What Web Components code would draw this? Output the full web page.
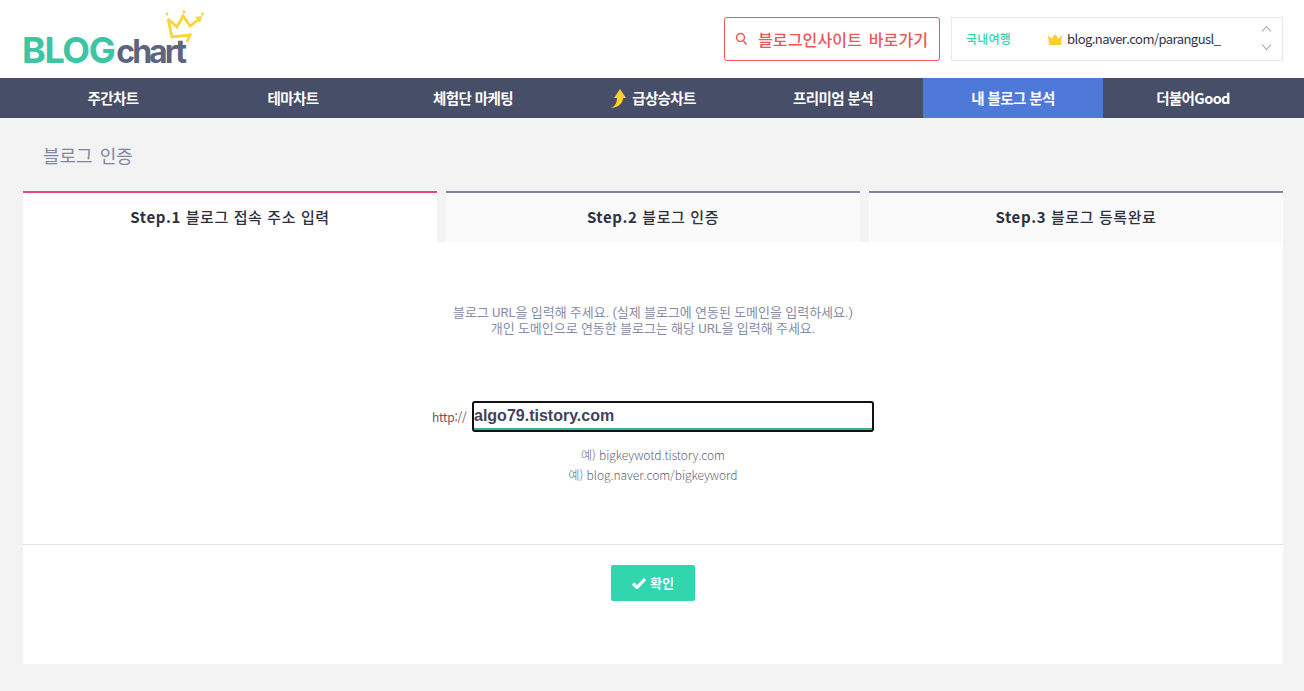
<!DOCTYPE html>
<html lang="ko"><head><meta charset="utf-8"><title>블로그 인증</title>
<style>
html,body{margin:0;padding:0;background:#f3f3f3;height:691px;overflow:hidden}
body{font-family:"Noto Sans CJK KR","Noto Sans",sans-serif;}
</style></head><body>
<bc-header></bc-header>
<bc-nav>
<bc-nav-item>주간차트</bc-nav-item>
<bc-nav-item>테마차트</bc-nav-item>
<bc-nav-item>체험단 마케팅</bc-nav-item>
<bc-nav-item arrow>급상승차트</bc-nav-item>
<bc-nav-item>프리미엄 분석</bc-nav-item>
<bc-nav-item active>내 블로그 분석</bc-nav-item>
<bc-nav-item>더불어Good</bc-nav-item>
</bc-nav>
<bc-main>
<bc-tab active><b>Step.1</b> 블로그 접속 주소 입력</bc-tab>
<bc-tab><b>Step.2</b> 블로그 인증</bc-tab>
<bc-tab><b>Step.3</b> 블로그 등록완료</bc-tab>
</bc-main>
<script>
function def(name,html,init){
  customElements.define(name,class extends HTMLElement{
    constructor(){super();this.attachShadow({mode:'open'}).innerHTML=html;}
    connectedCallback(){if(init)init(this);}
  });
}
const KR='"Noto Sans CJK KR","Noto Sans",sans-serif';
def('bc-logo',`<style>
:host{display:block;position:relative;width:190px;height:70px}
.t{position:absolute;left:-1px;top:25px;display:flex;align-items:baseline;line-height:40px;white-space:nowrap}
.b{font:700 36px/40px "Inter","Liberation Sans",sans-serif;color:#3cc5a2;letter-spacing:-1.4px}
.c{font:700 32px/40px "Inter","Liberation Sans",sans-serif;color:#5c6480;letter-spacing:-3px;margin-left:2px}
svg{position:absolute;left:140px;top:5px}
</style><div class="t"><span class="b">BLOG</span><span class="c">chart</span></div>
<svg width="44" height="36" viewBox="0 0 44 36"><g fill="none" stroke="#fbd43c" stroke-width="2.800" stroke-linejoin="miter"><path d="M5 9l4 18 18-2-3 7"/><path d="M5 9l9 8 6-11 7 10 8-6"/></g><path d="M32 7l7-1-2 7z" fill="#fbd43c"/><circle cx="4" cy="4" r="1.500" fill="#fbd43c"/><circle cx="21" cy="1.800" r="1.500" fill="#fbd43c"/><circle cx="39.500" cy="4" r="1.500" fill="#fbd43c"/></svg>`);
def('bc-insight',`<style>
:host{display:flex;align-items:center;box-sizing:border-box;width:216px;height:44px;border:1px solid #ee5658;border-radius:3px;padding-left:10px;color:#ee5658;font:500 16px/20px ${KR};letter-spacing:.15px;word-spacing:2px;white-space:nowrap;background:#fff}
svg{margin-right:10px;flex:none}
</style><svg width="13" height="14" viewBox="0 0 13 14" fill="none" stroke="#ee5658" stroke-width="1.500"><circle cx="5.500" cy="5.500" r="4"/><path d="M8.500 9l3 3.500"/></svg><slot></slot>`);
def('bc-selector',`<style>
:host{display:flex;align-items:center;position:relative;box-sizing:border-box;width:332px;height:44px;border:1px solid #e6e8f5;background:#fff;white-space:nowrap}
.cat{font:500 12px/16px ${KR};color:#2fd5ae;margin-left:14px;width:82px;letter-spacing:.2px}
svg.cr{flex:none;margin-right:5px}
.u{font:400 13px/18px ${KR};color:#2f3444;letter-spacing:-.55px}
.ar{position:absolute;right:10px;top:7px;display:flex;flex-direction:column;gap:10px}
</style><span class="cat">국내여행</span>
<svg class="cr" width="14" height="11" viewBox="0 0 14 11"><path d="M0 1l3.500 3.500L7 0l3.500 4.500L14 1l-1 10H1z" fill="#fbcf33"/></svg>
<span class="u">blog.naver.com/parangusl_</span>
<div class="ar"><svg width="11" height="8" viewBox="0 0 11 8" fill="none" stroke="#9aa0b4" stroke-width="1.100"><path d="M1 6.500l4.500-5 4.500 5"/></svg><svg width="11" height="8" viewBox="0 0 11 8" fill="none" stroke="#9aa0b4" stroke-width="1.100"><path d="M1 1.500l4.500 5 4.500-5"/></svg></div>`);
def('bc-header',`<style>
:host{display:flex;align-items:flex-start;box-sizing:border-box;height:78px;background:#fff;padding:0 21px 0 23px}
bc-logo{margin-top:5px}
.r{margin-left:auto;display:flex;gap:11px;margin-top:17px}
</style><bc-logo></bc-logo><div class="r"><bc-insight>블로그인사이트 바로가기</bc-insight><bc-selector></bc-selector></div>`);
def('bc-nav',`<style>
:host{display:flex;box-sizing:border-box;height:40px;background:#474e67;padding-left:23px}
</style><slot></slot>`);
def('bc-nav-item',`<style>
:host{display:flex;align-items:center;justify-content:center;width:180px;height:40px;color:#fff;font:700 14.5px/20px ${KR};letter-spacing:-.6px;white-space:nowrap}
:host([active]){background:#4f79d8}
svg{display:none;margin-right:5px}
:host([arrow]) svg{display:block}
</style><svg width="17" height="19" viewBox="0 0 17 19"><path d="M0 19c5-1 7-5 7-10H4l6-9 6 9h-3C13 15 7 19 0 19z" fill="#fbd02f"/></svg><slot></slot>`);
def('bc-tab',`<style>
:host{display:block;box-sizing:border-box;width:414px;height:51px;background:#fafafa;border-top:2px solid #7d86a3;color:#2c3140;font:500 15px/47px ${KR};letter-spacing:.6px;text-align:center;white-space:nowrap}
:host([active]){background:#fff;border-top-color:#e8476f}
::slotted(b){font-weight:700}
</style><slot></slot>`);
def('bc-form',`<style>
:host{display:flex;flex-direction:column;align-items:center;background:#fff;height:422px}
.msg{margin-top:63px;font:400 13px/16px Roboto,${KR};color:#868ca4;text-align:center;width:100%}
.row{display:flex;align-items:center;margin-top:64px;width:442px}
.p{font:400 12px/16px ${KR};color:#8b4a52;width:40px;flex:none;letter-spacing:-.25px}
input{box-sizing:border-box;width:402px;height:31px;border:2px solid #111;border-radius:3px;outline:0;padding:0 0 2px 0;font:700 16px "Liberation Sans",Arial,sans-serif;color:#3f4459;box-shadow:inset 0 -2px 0 #2fb596;background:#fff}
.ex{margin-top:13px;font:300 12px/20px ${KR};color:#5f6472;text-align:center;letter-spacing:-.05px}
hr{border:0;height:1px;background:#e2e2e6;width:100%;margin:59px 0 20px;flex:none}
button{display:flex;align-items:center;justify-content:center;gap:4px;width:84px;height:36px;border:0;border-radius:2px;background:#31d5ae;color:#fff;font:700 13px/16px ${KR};padding:0}
</style>
<div class="msg">블로그 URL을 입력해 주세요. (실제 블로그에 연동된 도메인을 입력하세요.)<br>개인 도메인으로 연동한 블로그는 해당 URL을 입력해 주세요.</div>
<div class="row"><span class="p">http://</span><input value="algo79.tistory.com"></div>
<div class="ex">예) bigkeywotd.tistory.com<br>예) blog.naver.com/bigkeyword</div>
<hr>
<button><svg width="14" height="12" viewBox="0 0 14 12"><path d="M1 6.500l4 4 8-8.500" fill="none" stroke="#fff" stroke-width="3.200"/></svg>확인</button>`);
def('bc-main',`<style>
:host{display:block;box-sizing:border-box;height:573px;background:#f3f3f3;padding:0 21px 0 23px}
h1{margin:0;padding:25px 0 0 20px;height:73px;box-sizing:border-box;font:400 18px/24px ${KR};word-spacing:2px;color:#8088a4}
.tabs{display:flex;justify-content:space-between}
</style><h1>블로그 인증</h1><div class="tabs"><slot></slot></div><bc-form></bc-form>`);
</script>
</body></html>
